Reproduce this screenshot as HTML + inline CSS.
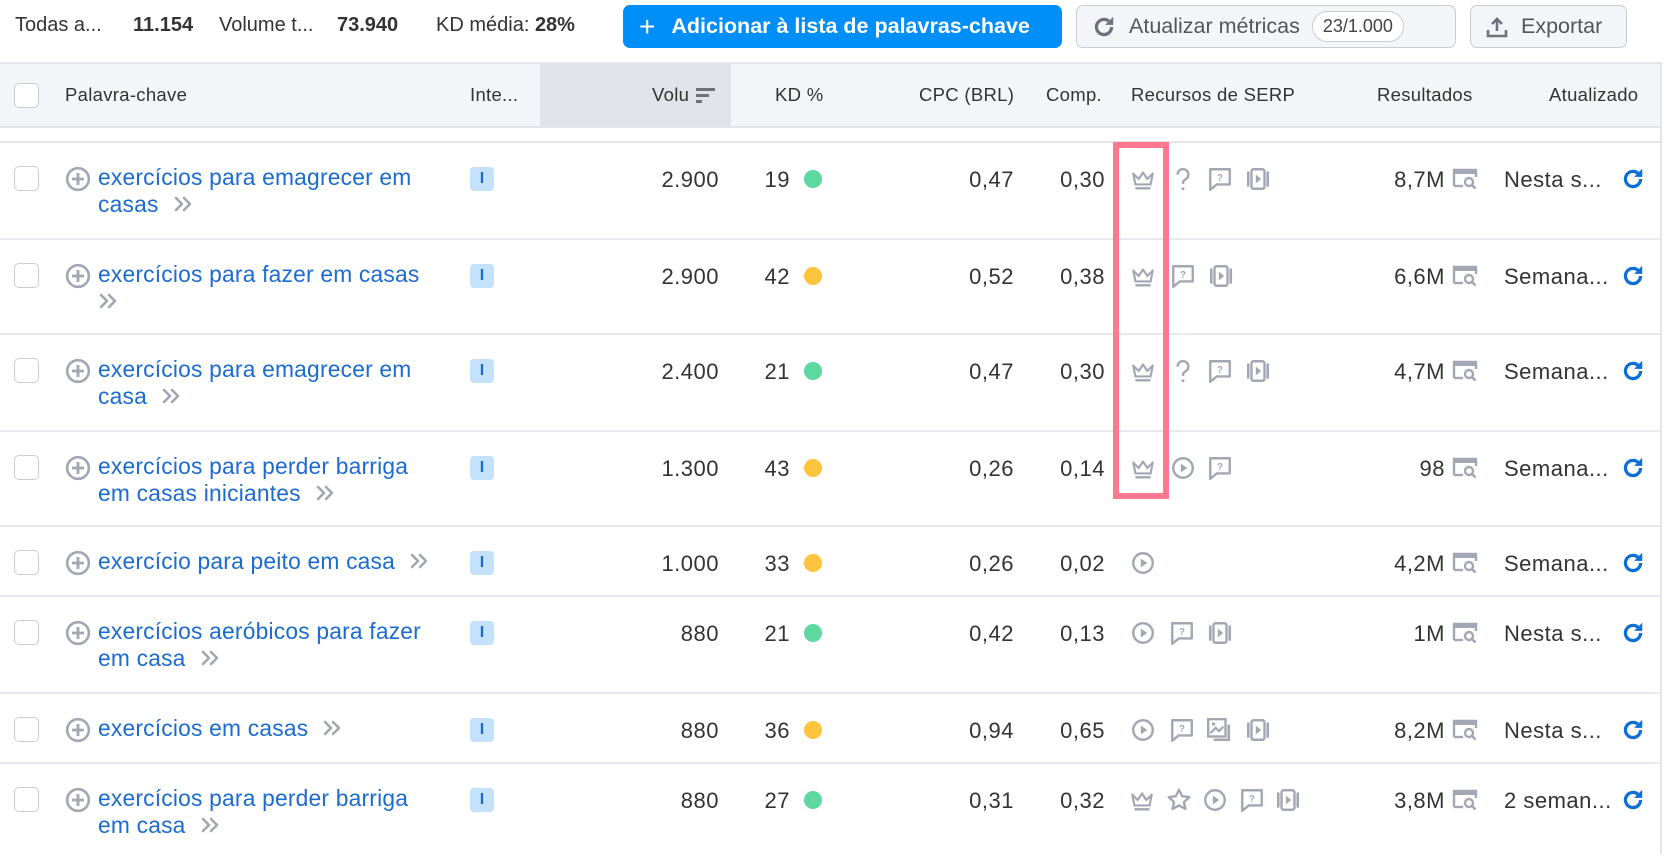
<!DOCTYPE html>
<html><head><meta charset="utf-8">
<style>
*{box-sizing:border-box;margin:0;padding:0}
body{width:1664px;height:854px;overflow:hidden;background:#fff;font-family:"Liberation Sans",sans-serif;color:#333;position:relative}
.a{position:absolute;white-space:nowrap}
.top{font-size:20px;color:#333;top:14px}
.btn{position:absolute;top:5px;height:43px;border-radius:7px;font-size:21px;display:flex;align-items:center}
.hdr{position:absolute;left:0;top:62px;width:1661px;height:66px;background:#f4f5f9;border-top:2px solid #e4e5ea;border-bottom:2px solid #e4e5ea}
.hl{font-size:18.5px;color:#333;top:84px;letter-spacing:0.3px}
.row{position:absolute;left:0;width:1661px;border-bottom:2px solid #e8e9ee}
.cb{position:absolute;left:14px;top:23px;width:25px;height:25px;border:1.5px solid #c9ccd3;border-radius:5px;background:#fff}
.kw{position:absolute;left:98px;top:21px;font-size:22.8px;letter-spacing:0.2px;color:#1b6bd0;line-height:27px;white-space:nowrap}
.num{position:absolute;top:24px;font-size:22px;letter-spacing:0.5px;color:#333;text-align:right;white-space:nowrap}
.badge{position:absolute;left:470px;top:24px;width:24px;height:24px;background:#c4e2fb;border-radius:4px;color:#1b6bd0;font-size:16px;font-weight:bold;text-align:center;line-height:24px}
.dot{position:absolute;left:804px;top:27px;width:18px;height:18px;border-radius:50%}
.g{background:#5cd8a0}.y{background:#ffc43d}
.ic{position:absolute;top:23px;width:26px;height:26px}
.chev{display:inline-block;width:20px;height:18px;margin-left:14px;vertical-align:-1px}
.v{right:942px}.k{right:871px}.c{right:647px}.m{right:556px}.r{right:216px}
</style></head><body>
<svg width="0" height="0" style="position:absolute">
<defs>
<symbol id="crown" viewBox="0 0 24 24"><path d="M3 7l5 5 4-6 4 6 5-5-2 10H5z" fill="none" stroke="#a3a7b3" stroke-width="2" stroke-linejoin="round"/><rect x="5" y="19.5" width="14" height="2.2" fill="#a3a7b3"/></symbol>
<symbol id="q" viewBox="0 0 24 24"><path d="M7 8a5 5 0 1 1 7 4.5c-1.3.7-2 1.5-2 3v1" fill="none" stroke="#a3a7b3" stroke-width="2.2"/><circle cx="12" cy="21" r="1.4" fill="#a3a7b3"/></symbol>
<symbol id="bub" viewBox="0 0 24 24"><path d="M3 3h18v14H9l-6 5z" fill="none" stroke="#a3a7b3" stroke-width="2.2" stroke-linejoin="round"/><text x="12" y="14" font-size="9" text-anchor="middle" fill="#a3a7b3" font-family="Liberation Sans" font-weight="bold">?</text></symbol>
<symbol id="vid" viewBox="0 0 24 24"><rect x="6" y="3" width="12" height="18" rx="2" fill="none" stroke="#a3a7b3" stroke-width="2.2"/><path d="M3 6v12M21 6v12" stroke="#a3a7b3" stroke-width="2.4" stroke-linecap="round"/><path d="M10 8l5 4-5 4z" fill="#a3a7b3"/></symbol>
<symbol id="play" viewBox="0 0 24 24"><circle cx="12" cy="12" r="9" fill="none" stroke="#a3a7b3" stroke-width="2.2"/><path d="M10 8l6 4-6 4z" fill="#a3a7b3"/></symbol>
<symbol id="img" viewBox="0 0 24 24"><rect x="2" y="2" width="16" height="16" fill="none" stroke="#a3a7b3" stroke-width="2.2"/><path d="M4 15l5-5 3 3 4-4" fill="none" stroke="#a3a7b3" stroke-width="2"/><circle cx="7" cy="6.5" r="1.5" fill="#a3a7b3"/><path d="M21 7v14H7" fill="none" stroke="#a3a7b3" stroke-width="2.4"/></symbol>
<symbol id="star" viewBox="0 0 24 24"><path d="M12 2.5l2.9 6 6.6.8-4.9 4.5 1.3 6.5L12 17l-5.9 3.3 1.3-6.5L2.5 9.3l6.6-.8z" fill="none" stroke="#a3a7b3" stroke-width="2.2" stroke-linejoin="round"/></symbol>
<symbol id="plus" viewBox="0 0 24 24"><circle cx="12" cy="12" r="10" fill="none" stroke="#a3a7b3" stroke-width="2.4"/><path d="M12 6.5v11M6.5 12h11" stroke="#a3a7b3" stroke-width="2.6"/></symbol>
<symbol id="ser" viewBox="0 0 26 24"><path d="M2 19V3h22v7" fill="none" stroke="#a3a7b3" stroke-width="2.4"/><path d="M2 19h9" stroke="#a3a7b3" stroke-width="2.4"/><path d="M2 3h22v4H2z" fill="#a3a7b3"/><circle cx="17" cy="15" r="4" fill="none" stroke="#a3a7b3" stroke-width="2.4"/><path d="M20 18l3.5 3.5" stroke="#a3a7b3" stroke-width="2.6"/></symbol>
<symbol id="ref" viewBox="0 0 24 24"><path d="M19 12a7 7 0 1 1-2.5-5.4" fill="none" stroke="#0b6fd6" stroke-width="3"/><path d="M20.5 2.5v7.5H13z" fill="#0b6fd6"/></symbol>
<symbol id="chv" viewBox="0 0 20 18"><path d="M3 3l6 6-6 6M11 3l6 6-6 6" fill="none" stroke="#a3a7b0" stroke-width="2.6" stroke-linecap="round" stroke-linejoin="round"/></symbol>
</defs></svg>

<div class="a top" style="left:15px">Todas a...</div>
<div class="a top" style="left:133px;font-weight:bold">11.154</div>
<div class="a top" style="left:219px">Volume t...</div>
<div class="a top" style="left:337px;font-weight:bold">73.940</div>
<div class="a top" style="left:436px">KD média: <b>28%</b></div>

<div class="btn" style="left:623px;width:439px;background:#008ff8;color:#fff;font-weight:bold;font-size:21.5px;padding-left:16px"><span style="font-size:28px;font-weight:normal;margin-right:16px">+</span>Adicionar à lista de palavras-chave</div>
<div class="btn" style="left:1076px;width:380px;background:#f4f5f9;border:1.5px solid #c9ccd3;color:#555;padding-left:14px;font-size:21.5px"><svg width="26" height="26" viewBox="0 0 24 24" style="margin-right:12px"><path d="M19 12a7 7 0 1 1-2.5-5.4" fill="none" stroke="#6c717a" stroke-width="3"/><path d="M20.5 2.5v7.5H13z" fill="#6c717a"/></svg>Atualizar métricas<span style="margin-left:12px;border:1.5px solid #c9ccd3;background:#fff;border-radius:16px;font-size:18px;padding:4px 10px;color:#444">23/1.000</span></div>
<div class="btn" style="left:1470px;width:157px;background:#f4f5f9;border:1.5px solid #c9ccd3;color:#555;padding-left:14px;font-size:21.5px"><svg width="24" height="24" viewBox="0 0 24 24" style="margin-right:12px"><path d="M12 16V4M7 9l5-5 5 5" fill="none" stroke="#6c717a" stroke-width="2.6"/><path d="M3 15v6h18v-6" fill="none" stroke="#6c717a" stroke-width="2.6"/></svg>Exportar</div>

<div class="hdr"></div>
<div class="a" style="left:540px;top:64px;width:191px;height:62px;background:#e1e2ea"></div>
<div class="a" style="left:14px;top:83px;width:25px;height:25px;border:1.5px solid #c9ccd3;border-radius:5px;background:#fff"></div>
<div class="a hl" style="left:65px">Palavra-chave</div>
<div class="a hl" style="left:470px">Inte...</div>
<div class="a hl" style="left:652px">Volu</div>
<svg class="a" style="left:696px;top:87px" width="20" height="18"><rect x="0" y="1" width="19" height="3" fill="#6c717a"/><rect x="0" y="7" width="13" height="3" fill="#6c717a"/><rect x="0" y="13" width="6" height="3" fill="#6c717a"/></svg>
<div class="a hl" style="left:775px">KD %</div>
<div class="a hl" style="left:919px">CPC (BRL)</div>
<div class="a hl" style="left:1046px">Comp.</div>
<div class="a hl" style="left:1131px">Recursos de SERP</div>
<div class="a hl" style="left:1377px">Resultados</div>
<div class="a hl" style="left:1549px">Atualizado</div>
<div class="a" style="left:0;top:141px;width:1661px;height:2px;background:#e4e5ea"></div>
<div class="a" style="left:1660px;top:62px;width:2px;height:792px;background:#e4e5ea"></div>

<div class="row" style="top:143px;height:97px">
<div class="cb"></div><svg class="ic" style="left:65px"><use href="#plus"/></svg>
<div class="kw">exercícios para emagrecer em<br>casas<svg class="chev"><use href="#chv"/></svg></div>
<div class="badge">I</div>
<div class="num v">2.900</div><div class="num k">19</div><div class="dot g"></div>
<div class="num c">0,47</div><div class="num m">0,30</div>
<svg class="ic" style="left:1130px"><use href="#crown"/></svg><svg class="ic" style="left:1170px"><use href="#q"/></svg><svg class="ic" style="left:1207px"><use href="#bub"/></svg><svg class="ic" style="left:1245px"><use href="#vid"/></svg>
<div class="num r">8,7M</div><svg class="ic" style="left:1452px;width:26px"><use href="#ser"/></svg>
<div class="num" style="left:1504px">Nesta s...</div><svg class="ic" style="left:1620px"><use href="#ref"/></svg>
</div>

<div class="row" style="top:240px;height:95px">
<div class="cb"></div><svg class="ic" style="left:65px"><use href="#plus"/></svg>
<div class="kw">exercícios para fazer em casas<br><svg class="chev" style="margin-left:0"><use href="#chv"/></svg></div>
<div class="badge">I</div>
<div class="num v">2.900</div><div class="num k">42</div><div class="dot y"></div>
<div class="num c">0,52</div><div class="num m">0,38</div>
<svg class="ic" style="left:1130px"><use href="#crown"/></svg><svg class="ic" style="left:1170px"><use href="#bub"/></svg><svg class="ic" style="left:1208px"><use href="#vid"/></svg>
<div class="num r">6,6M</div><svg class="ic" style="left:1452px;width:26px"><use href="#ser"/></svg>
<div class="num" style="left:1504px">Semana...</div><svg class="ic" style="left:1620px"><use href="#ref"/></svg>
</div>

<div class="row" style="top:335px;height:97px">
<div class="cb"></div><svg class="ic" style="left:65px"><use href="#plus"/></svg>
<div class="kw">exercícios para emagrecer em<br>casa<svg class="chev"><use href="#chv"/></svg></div>
<div class="badge">I</div>
<div class="num v">2.400</div><div class="num k">21</div><div class="dot g"></div>
<div class="num c">0,47</div><div class="num m">0,30</div>
<svg class="ic" style="left:1130px"><use href="#crown"/></svg><svg class="ic" style="left:1170px"><use href="#q"/></svg><svg class="ic" style="left:1207px"><use href="#bub"/></svg><svg class="ic" style="left:1245px"><use href="#vid"/></svg>
<div class="num r">4,7M</div><svg class="ic" style="left:1452px;width:26px"><use href="#ser"/></svg>
<div class="num" style="left:1504px">Semana...</div><svg class="ic" style="left:1620px"><use href="#ref"/></svg>
</div>

<div class="row" style="top:432px;height:95px">
<div class="cb"></div><svg class="ic" style="left:65px"><use href="#plus"/></svg>
<div class="kw">exercícios para perder barriga<br>em casas iniciantes<svg class="chev"><use href="#chv"/></svg></div>
<div class="badge">I</div>
<div class="num v">1.300</div><div class="num k">43</div><div class="dot y"></div>
<div class="num c">0,26</div><div class="num m">0,14</div>
<svg class="ic" style="left:1130px"><use href="#crown"/></svg><svg class="ic" style="left:1170px"><use href="#play"/></svg><svg class="ic" style="left:1207px"><use href="#bub"/></svg>
<div class="num r">98</div><svg class="ic" style="left:1452px;width:26px"><use href="#ser"/></svg>
<div class="num" style="left:1504px">Semana...</div><svg class="ic" style="left:1620px"><use href="#ref"/></svg>
</div>

<div class="row" style="top:527px;height:70px">
<div class="cb"></div><svg class="ic" style="left:65px"><use href="#plus"/></svg>
<div class="kw">exercício para peito em casa<svg class="chev"><use href="#chv"/></svg></div>
<div class="badge">I</div>
<div class="num v">1.000</div><div class="num k">33</div><div class="dot y"></div>
<div class="num c">0,26</div><div class="num m">0,02</div>
<svg class="ic" style="left:1130px"><use href="#play"/></svg>
<div class="num r">4,2M</div><svg class="ic" style="left:1452px;width:26px"><use href="#ser"/></svg>
<div class="num" style="left:1504px">Semana...</div><svg class="ic" style="left:1620px"><use href="#ref"/></svg>
</div>

<div class="row" style="top:597px;height:97px">
<div class="cb"></div><svg class="ic" style="left:65px"><use href="#plus"/></svg>
<div class="kw">exercícios aeróbicos para fazer<br>em casa<svg class="chev"><use href="#chv"/></svg></div>
<div class="badge">I</div>
<div class="num v">880</div><div class="num k">21</div><div class="dot g"></div>
<div class="num c">0,42</div><div class="num m">0,13</div>
<svg class="ic" style="left:1130px"><use href="#play"/></svg><svg class="ic" style="left:1169px"><use href="#bub"/></svg><svg class="ic" style="left:1207px"><use href="#vid"/></svg>
<div class="num r">1M</div><svg class="ic" style="left:1452px;width:26px"><use href="#ser"/></svg>
<div class="num" style="left:1504px">Nesta s...</div><svg class="ic" style="left:1620px"><use href="#ref"/></svg>
</div>

<div class="row" style="top:694px;height:70px">
<div class="cb"></div><svg class="ic" style="left:65px"><use href="#plus"/></svg>
<div class="kw">exercícios em casas<svg class="chev"><use href="#chv"/></svg></div>
<div class="badge">I</div>
<div class="num v">880</div><div class="num k">36</div><div class="dot y"></div>
<div class="num c">0,94</div><div class="num m">0,65</div>
<svg class="ic" style="left:1130px"><use href="#play"/></svg><svg class="ic" style="left:1169px"><use href="#bub"/></svg><svg class="ic" style="left:1206px"><use href="#img"/></svg><svg class="ic" style="left:1245px"><use href="#vid"/></svg>
<div class="num r">8,2M</div><svg class="ic" style="left:1452px;width:26px"><use href="#ser"/></svg>
<div class="num" style="left:1504px">Nesta s...</div><svg class="ic" style="left:1620px"><use href="#ref"/></svg>
</div>

<div class="row" style="top:764px;height:95px;border-bottom:none">
<div class="cb"></div><svg class="ic" style="left:65px"><use href="#plus"/></svg>
<div class="kw">exercícios para perder barriga<br>em casa<svg class="chev"><use href="#chv"/></svg></div>
<div class="badge">I</div>
<div class="num v">880</div><div class="num k">27</div><div class="dot g"></div>
<div class="num c">0,31</div><div class="num m">0,32</div>
<svg class="ic" style="left:1129px"><use href="#crown"/></svg><svg class="ic" style="left:1166px"><use href="#star"/></svg><svg class="ic" style="left:1202px"><use href="#play"/></svg><svg class="ic" style="left:1239px"><use href="#bub"/></svg><svg class="ic" style="left:1275px"><use href="#vid"/></svg>
<div class="num r">3,8M</div><svg class="ic" style="left:1452px;width:26px"><use href="#ser"/></svg>
<div class="num" style="left:1504px">2 seman...</div><svg class="ic" style="left:1620px"><use href="#ref"/></svg>
</div>

<div class="a" style="left:1113px;top:142px;width:56px;height:357px;border:6px solid #ff7890"></div>
</body></html>
